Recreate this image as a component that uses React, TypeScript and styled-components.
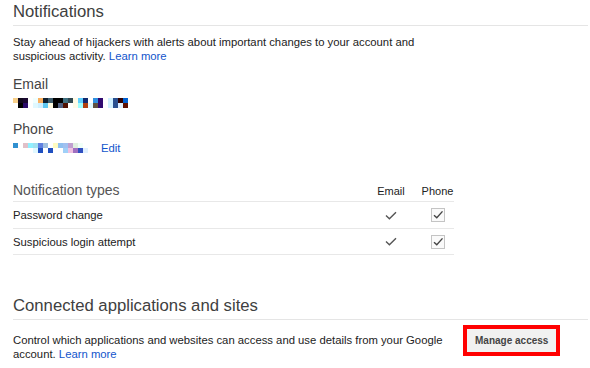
import React from "react";
import styled, { createGlobalStyle } from "styled-components";

const Global = createGlobalStyle`
  html, body { margin: 0; padding: 0; background: #fff; }
  body { font-family: "Liberation Sans", Arial, sans-serif; color: #222; }
`;

const Page = styled.div`
  padding: 0 2px 0 13px;
  width: 575px;
`;

const Title = styled.h2<{ $top?: number }>`
  margin: ${(p) => p.$top ?? 0}px 0 0;
  padding: 2px 0 3px;
  font-size: 16.7px;
  line-height: 20px;
  font-weight: normal;
  color: #404040;
  border-bottom: 1px solid #e5e5e5;
`;

const Para = styled.p<{ $top: number }>`
  margin: ${(p) => p.$top}px 0 0;
  width: 440px;
  font-size: 11.3px;
  line-height: 13.5px;
  color: #222;
`;

const Link = styled.a`
  color: #15c;
  text-decoration: none;
  cursor: pointer;
`;

const Label = styled.div`
  margin-top: 13px;
  font-size: 14px;
  line-height: 17px;
  color: #444;
`;

const MosaicSvg = styled.svg<{ $top?: number }>`
  display: block;
  margin-top: ${(p) => p.$top ?? 0}px;
  flex: none;
`;

const PhoneRow = styled.div`
  display: flex;
  align-items: center;
  gap: 13px;
  margin-top: 3px;
  height: 14px;
  font-size: 11.3px;
  line-height: 14px;
`;

const Table = styled.div`
  margin-top: 27px;
  width: 441px;
`;

const Row = styled.div<{ $head?: boolean }>`
  display: grid;
  grid-template-columns: 1fr 32px 33px;
  column-gap: 14px;
  align-items: ${(p) => (p.$head ? "baseline" : "center")};
  padding: ${(p) => (p.$head ? "0 0 2px" : "6px 0 5.5px")};
  border-bottom: 1px solid #e8e8e8;
  font-size: 11.3px;
  line-height: 14px;
  color: #222;
`;

const TypesHead = styled.div`
  font-size: 14px;
  line-height: 17px;
  color: #555;
`;

const ColHead = styled.div`
  justify-self: center;
  font-size: 11px;
  color: #222;
`;

const Cell = styled.div`
  justify-self: center;
  display: flex;
  align-items: center;
  height: 14px;
`;

const BottomRow = styled.div`
  display: flex;
  align-items: flex-start;
  gap: 10px;
  padding-top: 5px;
`;

const Highlight = styled.span`
  display: inline-flex;
  border: 4px solid #ff0000;
  flex: none;
`;

const Button = styled.button`
  height: 23px;
  padding: 0 8px;
  border: none;
  background: #f1f1f1;
  font-family: "Liberation Sans", Arial, sans-serif;
  font-weight: bold;
  font-size: 10px;
  line-height: 23px;
  color: #444;
  cursor: pointer;
`;

type Col = [string, string];

const emailPix: Col[] = [
  ["#f8d08a", "#ffffff"], ["#120a1e", "#000000"], ["#1a0830", "#2a0a6a"],
  ["#ffffff", "#ffffff"], ["#f0ffff", "#e0f8ff"], ["#f9b060", "#d0f0ff"],
  ["#102030", "#60c8f0"], ["#406070", "#fffbe0"], ["#000000", "#000000"],
  ["#000000", "#506080"], ["#407080", "#501000"], ["#304850", "#ffffff"],
  ["#fffbe6", "#fffbe6"], ["#60d0ff", "#a0ffff"], ["#102a70", "#b04010"],
  ["#ffffff", "#e0f8ff"], ["#3090e0", "#605040"], ["#300a70", "#300a70"],
  ["#ffffff", "#ffffff"], ["#d0f0ff", "#d0f0ff"], ["#2a5090", "#2a5090"],
  ["#300000", "#e0f0ff"], ["#0060d0", "#601000"],
];

const phonePix: Col[] = [
  ["#3090d0", "#ffffff"], ["#ffffff", "#ffffff"], ["#e0c0c8", "#ffffff"],
  ["#90f0ff", "#ffffff"], ["#a0e0f0", "#e0f8ff"], ["#6080e0", "#2050c0"],
  ["#a0c0e0", "#ffffff"], ["#ffffff", "#2050c0"], ["#fffbc0", "#ffffff"],
  ["#90c0f0", "#ffffff"], ["#a0c0f0", "#a0d0f8"], ["#c0a0d0", "#f0c0e0"],
  ["#e0f0e0", "#a070c0"], ["#f0fff8", "#3050c0"], ["#ffffff", "#e0f0ff"],
];

function Mosaic({ cols, top }: { cols: Col[]; top?: number }) {
  const w = cols.length * 5;
  return (
    <MosaicSvg $top={top} width={w} height={10} viewBox={`0 0 ${w} 10`} shapeRendering="crispEdges">
      {cols.map((c, i) => (
        <React.Fragment key={i}>
          <rect x={i * 5} y={0} width={5} height={5} fill={c[0]} />
          <rect x={i * 5} y={5} width={5} height={5} fill={c[1]} />
        </React.Fragment>
      ))}
    </MosaicSvg>
  );
}

function Check() {
  return (
    <svg width="12" height="9" viewBox="0 0 12 9">
      <path d="M1 4.6 L4.4 7.8 L11 1.2" fill="none" stroke="#555" strokeWidth="1.4" />
    </svg>
  );
}

function CheckBox() {
  return (
    <svg width="14" height="14" viewBox="0 0 14 14">
      <rect x="0.5" y="0.5" width="13" height="13" fill="#fafafa" stroke="#c4c4c4" />
      <path d="M3 7.2 L5.8 9.8 L11.5 3.4" fill="none" stroke="#444" strokeWidth="1.4" />
    </svg>
  );
}

const types = ["Password change", "Suspicious login attempt"];

export default function App() {
  return (
    <>
      <Global />
      <Page>
        <Title>Notifications</Title>
        <Para $top={10}>
          Stay ahead of hijackers with alerts about important changes to your account and
          suspicious activity. <Link>Learn more</Link>
        </Para>
        <Label>Email</Label>
        <Mosaic cols={emailPix} top={5} />
        <Label>Phone</Label>
        <PhoneRow>
          <Mosaic cols={phonePix} />
          <Link>Edit</Link>
        </PhoneRow>
        <Table>
          <Row $head>
            <TypesHead>Notification types</TypesHead>
            <ColHead>Email</ColHead>
            <ColHead>Phone</ColHead>
          </Row>
          {types.map((t) => (
            <Row key={t}>
              <div>{t}</div>
              <Cell>
                <Check />
              </Cell>
              <Cell>
                <CheckBox />
              </Cell>
            </Row>
          ))}
        </Table>
        <Title $top={39}>Connected applications and sites</Title>
        <BottomRow>
          <Para $top={9}>
            Control which applications and websites can access and use details from your Google
            account. <Link>Learn more</Link>
          </Para>
          <Highlight>
            <Button>Manage access</Button>
          </Highlight>
        </BottomRow>
      </Page>
    </>
  );
}
